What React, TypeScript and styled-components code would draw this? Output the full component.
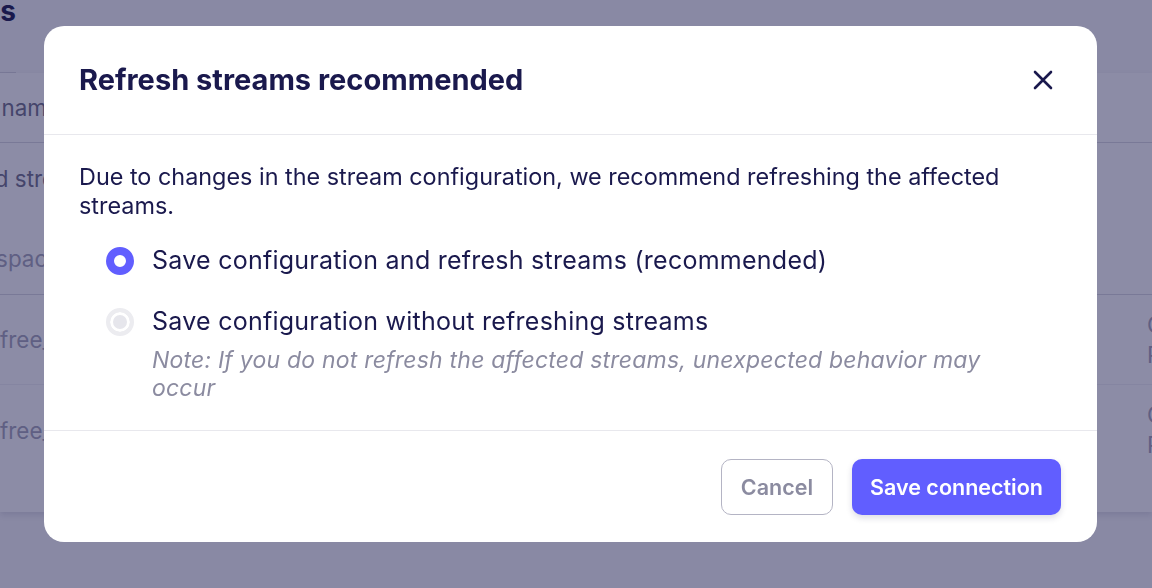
import { createGlobalStyle, styled } from 'styled-components';

const GlobalStyle = createGlobalStyle`
  html, body {
    margin: 0;
    padding: 0;
    width: 1152px;
    height: 588px;
    overflow: hidden;
    background: #f8f8fa;
    font-family: Inter, "Noto Sans", "Liberation Sans", sans-serif;
    color: #1a194d;
  }
  * { box-sizing: border-box; }
`;

/* ---------- page behind the modal ---------- */

export const Page = styled.div`
  width: 1152px;
  height: 588px;
  overflow: hidden;
  display: flex;
  flex-direction: column;
`;

export const PageTitleWrap = styled.div`
  width: 16px;
  height: 73px;
  display: flex;
  justify-content: flex-end;
  white-space: nowrap;
  border-bottom: 1px solid #d9d9e0;
`;

export const PageTitle = styled.h1`
  margin: -5px 0 0;
  font-size: 28px;
  line-height: 32px;
  font-weight: 700;
  color: #1a194d;
`;

export const Card = styled.section`
  background: #fff;
  display: flex;
  flex-direction: column;
  height: 439px;
  box-shadow: 0 3px 6px rgba(26, 25, 77, 0.12);
`;

export const Row = styled.div<{ $h: number; $line?: 'strong' | 'soft' | 'none' }>`
  flex: none;
  height: ${(p) => p.$h}px;
  display: grid;
  grid-template-columns: 1147px 1fr;
  border-bottom: ${(p) =>
    p.$line === 'strong' ? '1px solid #d9d9e0' : p.$line === 'soft' ? '1px solid #f0f0f4' : 'none'};
  white-space: nowrap;
  overflow: hidden;
`;

export const LeftCell = styled.div`
  display: flex;
  flex-direction: column;
  justify-content: center;
  gap: 51px;
  font-size: 22.4px;
  line-height: 29px;
`;

export const Muted = styled.span<{ $tone: 'mid' | 'light'; $shift?: number }>`
  margin-left: ${(p) => p.$shift ?? 0}px;
  color: ${(p) => (p.$tone === 'mid' ? '#717189' : '#a5a5b8')};
`;

export const RightCell = styled.div`
  display: flex;
  flex-direction: column;
  justify-content: center;
  font-size: 22.4px;
  line-height: 30px;
  color: #a5a5b8;
`;

/* ---------- modal ---------- */

export const Overlay = styled.div`
  position: fixed;
  inset: 0;
  background: rgba(26, 25, 77, 0.5);
  display: flex;
  align-items: flex-start;
  padding: 26px 0 0 44px;
`;

export const Modal = styled.div`
  width: 1053px;
  background: #fff;
  border-radius: 20px;
  display: flex;
  flex-direction: column;
  overflow: hidden;
`;

export const ModalHeader = styled.header`
  height: 109px;
  display: flex;
  align-items: center;
  justify-content: space-between;
  padding: 0 38px 0 35px;
  border-bottom: 1px solid #e8e8ed;
`;

export const ModalTitle = styled.h2`
  margin: 0;
  font-size: 29px;
  line-height: 34px;
  font-weight: 700;
  color: #1a194d;
`;

export const CloseButton = styled.button`
  width: 32px;
  height: 32px;
  padding: 0;
  border: none;
  background: none;
  display: flex;
  align-items: center;
  justify-content: center;
  color: #1a194d;
  cursor: pointer;
`;

export const ModalBody = styled.div`
  padding: 27px 36px 28px 35px;
  border-bottom: 1px solid #e8e8ed;
`;

export const Intro = styled.p`
  margin: 0;
  font-size: 23.4px;
  line-height: 29px;
  color: #1a194d;
`;

export const RadioGroup = styled.div`
  display: flex;
  flex-direction: column;
  gap: 32px;
  margin-top: 26px;
  padding-left: 27px;
`;

export const Option = styled.label`
  display: flex;
  align-items: flex-start;
  gap: 18px;
`;

export const RadioDot = styled.span<{ $checked?: boolean; $disabled?: boolean }>`
  flex: none;
  width: 28px;
  height: 28px;
  margin-top: 0.5px;
  border-radius: 50%;
  ${(p) =>
    p.$checked
      ? `border: 8px solid #615eff; background: #fff;`
      : `border: 4px solid #ececf0; background: #e6e6ec; box-shadow: inset 0 0 0 3px #fff;`}
`;

export const OptionText = styled.div`
  display: flex;
  flex-direction: column;
  gap: 10px;
`;

export const OptionLabel = styled.span`
  font-size: 25px;
  line-height: 29px;
  letter-spacing: 0.25px;
  color: #1a194d;
`;

export const OptionNote = styled.span`
  font-size: 23px;
  line-height: 28px;
  letter-spacing: 0.2px;
  font-style: italic;
  color: #8b8ba0;
  max-width: 850px;
`;

export const ModalFooter = styled.footer`
  height: 111px;
  display: flex;
  align-items: center;
  justify-content: flex-end;
  gap: 19px;
  padding: 0 36px;
`;

export const Button = styled.button<{ $variant: 'secondary' | 'primary' }>`
  height: 56px;
  border-radius: 10px;
  font-family: inherit;
  font-size: 21.5px;
  font-weight: 600;
  cursor: pointer;
  ${(p) =>
    p.$variant === 'primary'
      ? `padding: 0 18px; background: #615eff; color: #fff; border: none; box-shadow: 0 3px 6px rgba(26, 25, 77, 0.15);`
      : `padding: 0 19px; background: #fff; color: #8b8ba0; border: 1px solid #b4b4c4;`}
`;

function CloseIcon() {
  return (
    <svg width="20" height="20" viewBox="0 0 20 20" fill="none">
      <path d="M2 2 L18 18 M18 2 L2 18" stroke="currentColor" strokeWidth="2.6" strokeLinecap="round" />
    </svg>
  );
}

function App() {
  return (
    <>
      <GlobalStyle />
      <Page>
        <PageTitleWrap>
          <PageTitle>Streams</PageTitle>
        </PageTitleWrap>
        <Card>
          <Row $h={70} $line="strong">
            <LeftCell>
              <Muted $tone="mid" $shift={-80}>Stream name</Muted>
            </LeftCell>
            <RightCell />
          </Row>
          <Row $h={152} $line="strong">
            <LeftCell>
              <Muted $tone="mid" $shift={-84}>Selected streams</Muted>
              <Muted $tone="light" $shift={-66}>Namespace</Muted>
            </LeftCell>
            <RightCell />
          </Row>
          <Row $h={90} $line="soft">
            <LeftCell>
              <Muted $tone="light">free_users</Muted>
            </LeftCell>
            <RightCell>
              <span>Cursor</span>
              <span>Primary key</span>
            </RightCell>
          </Row>
          <Row $h={90} $line="none">
            <LeftCell>
              <Muted $tone="light">free_orders</Muted>
            </LeftCell>
            <RightCell>
              <span>Cursor</span>
              <span>Primary key</span>
            </RightCell>
          </Row>
        </Card>
      </Page>

      <Overlay>
        <Modal role="dialog" aria-modal="true">
          <ModalHeader>
            <ModalTitle>Refresh streams recommended</ModalTitle>
            <CloseButton aria-label="Close">
              <CloseIcon />
            </CloseButton>
          </ModalHeader>
          <ModalBody>
            <Intro>
              Due to changes in the stream configuration, we recommend refreshing the affected streams.
            </Intro>
            <RadioGroup>
              <Option>
                <RadioDot $checked />
                <OptionText>
                  <OptionLabel>Save configuration and refresh streams (recommended)</OptionLabel>
                </OptionText>
              </Option>
              <Option>
                <RadioDot $disabled />
                <OptionText>
                  <OptionLabel>Save configuration without refreshing streams</OptionLabel>
                  <OptionNote>
                    Note: If you do not refresh the affected streams, unexpected behavior may occur
                  </OptionNote>
                </OptionText>
              </Option>
            </RadioGroup>
          </ModalBody>
          <ModalFooter>
            <Button $variant="secondary">Cancel</Button>
            <Button $variant="primary">Save connection</Button>
          </ModalFooter>
        </Modal>
      </Overlay>
    </>
  );
}

export default App;
